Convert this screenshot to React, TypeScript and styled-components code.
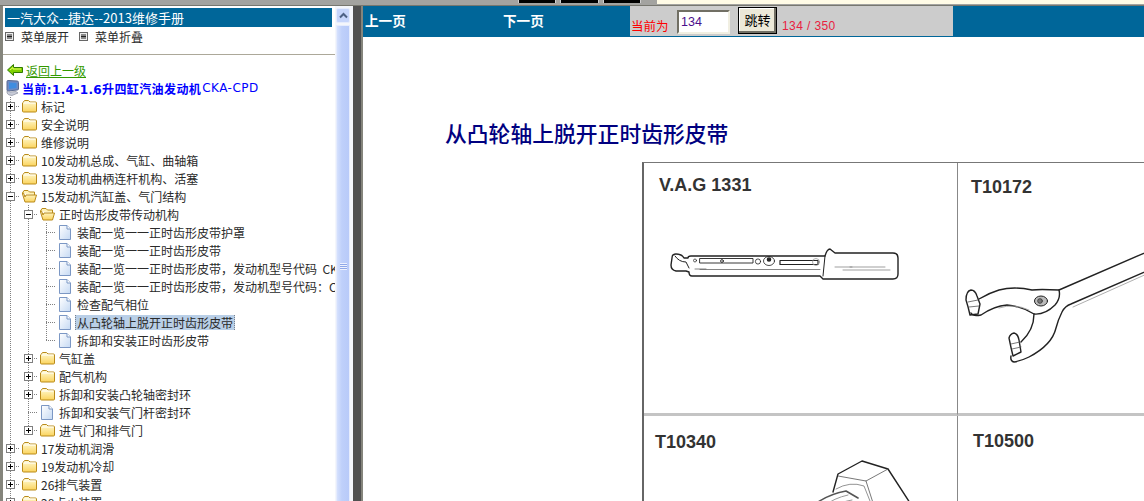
import React from 'react'
import styled, { createGlobalStyle } from 'styled-components'

const cjk = `"Noto Sans CJK SC", "Liberation Sans", sans-serif`

const GlobalStyle = createGlobalStyle`
  html, body {
    margin: 0;
    padding: 0;
    height: 501px;
    overflow: hidden;
    background: #fff;
    font-family: ${cjk};
    font-size: 12px;
  }
`

const Page = styled.div`
  display: flex;
  flex-direction: column;
  width: 1144px;
  height: 501px;
  overflow: hidden;
`

const WindowStrip = styled.div`
  display: flex;
  height: 6px;
  flex: none;
  background: #a3a3a0;
  border-bottom: 1px solid #77776f;
  box-sizing: border-box;
`

const StripButtons = styled.div`
  display: flex;
  gap: 4px;
  width: 139px;
  margin-left: 518px;
`

const StripButton = styled.div<{ $w: number }>`
  width: ${({ $w }) => $w}px;
  height: 3px;
  background: #000;
  border: 0 solid #cfcfcf;
  border-width: 0 1px;
  box-sizing: border-box;
`

const StripCream = styled.div`
  flex: 1;
  height: 4px;
  background: #fffbe6;
`

const Frames = styled.div`
  display: flex;
  flex: 1;
  min-height: 0;
`

const LeftFrame = styled.div`
  display: flex;
  width: 353px;
  flex: none;
  box-sizing: border-box;
  border-left: 3px solid #85857c;
`

const MenuPane = styled.div`
  width: 332px;
  flex: none;
  overflow: hidden;
  background: #fff;
`

const TitleBar = styled.div`
  margin: 2px 3px 0 2px;
  height: 19px;
  padding-left: 2px;
  background: #006699;
  color: #fff;
  font-size: 13px;
  line-height: 19px;
  white-space: nowrap;
`

const MenuActions = styled.div`
  display: flex;
  align-items: center;
  height: 19px;
  padding-left: 2px;
  margin-bottom: 8px;
  color: #2a2a2a;
`

const MenuAction = styled.span`
  display: flex;
  align-items: center;
  width: 74px;
  gap: 7px;
  white-space: nowrap;
`

const Divider = styled.div`
  height: 1px;
  background: #aca899;
`

const BackRow = styled.div`
  display: flex;
  align-items: center;
  height: 18px;
  margin-top: 6px;
  padding-left: 4px;
  gap: 3px;
`

const BackLink = styled.a`
  color: #339900;
  text-decoration: underline;
`

const CurrentRow = styled.div`
  display: flex;
  align-items: center;
  height: 18px;
  padding-left: 3px;
  gap: 3px;
  color: #0000ff;
  font-family: "DejaVu Sans", ${cjk};
  white-space: nowrap;
`

const CurrentName = styled.b`
  font-weight: 700;
  letter-spacing: 0.38px;
`

const CurrentCode = styled.span`
  margin-left: -2px;
  letter-spacing: 0.5px;
`

const TreeList = styled.div`
  margin-left: -1px;
`

const TreeRow = styled.div`
  display: flex;
  height: 18px;
  white-space: nowrap;
  color: #2a2a2a;
`

const vdots = 'repeating-linear-gradient(#808080 0 1px, transparent 1px 2px)'
const hdots = 'repeating-linear-gradient(90deg, #808080 0 1px, transparent 1px 2px)'

const Guide = styled.span`
  width: 18px;
  flex: none;
  background: ${vdots} 8px 0 / 1px 100% no-repeat;
`

const Joint = styled.span<{ $last?: boolean }>`
  width: 18px;
  height: 18px;
  flex: none;
  padding: 5px 0 0 4px;
  box-sizing: border-box;
  background-image: ${hdots}, ${vdots};
  background-repeat: no-repeat;
  background-position: 8px 9px, 8px 0;
  background-size: 10px 1px, 1px ${({ $last }) => ($last ? '9px' : '18px')};
`

const Toggle = styled.svg`
  display: block;
  background: #fff;
`

const NodeIcon = styled.span`
  display: flex;
  width: 18px;
  flex: none;
  align-items: center;
  justify-content: center;
`

const NodeLabel = styled.span<{ $selected?: boolean }>`
  align-self: center;
  height: 15px;
  margin-left: 1px;
  padding: 0 1px;
  line-height: 15px;
  white-space: pre;
  border: 0 ${({ $selected }) => ($selected ? 'dotted #77808c' : 'solid transparent')};
  border-width: 0 1px;
  background: ${({ $selected }) => ($selected ? '#b9cfe7' : 'transparent')};
`

const ScrollTrack = styled.div`
  width: 18px;
  flex: none;
  padding: 2px 3px 0 1px;
  box-sizing: border-box;
  background: #f4f6fb;
`

const ScrollButton = styled.div`
  display: flex;
  align-items: center;
  justify-content: center;
  height: 15px;
  border-radius: 2px;
  background: #c6d5fb;
  border: 1px solid #e6ecfd;
  box-sizing: border-box;
`

const ScrollThumb = styled.div`
  display: flex;
  align-items: center;
  justify-content: center;
  height: 482px;
  margin-top: 2px;
  background: linear-gradient(90deg, #d6e1fd, #bfd0fa 40%, #b8caf9);
  border: 1px solid #e6ecfd;
  box-sizing: border-box;
`

const Grip = styled.div`
  width: 7px;
  height: 7px;
  background: repeating-linear-gradient(#eef2fe 0 1px, #8fa8e8 1px 2px);
`

const Splitter = styled.div`
  width: 8px;
  flex: none;
  background: #505050;
`

const RightFrame = styled.div`
  display: flex;
  flex: 1;
  min-width: 0;
  flex-direction: column;
  overflow: hidden;
  background: #fff;
  border-left: 2px solid #85857c;
`

const TopBar = styled.div`
  display: flex;
  flex: none;
  height: 31px;
  padding-bottom: 1px;
  box-sizing: border-box;
  background: #006699;
`

const NavLink = styled.a<{ $w: number }>`
  width: ${({ $w }) => $w}px;
  flex: none;
  padding: 6px 0 0 2px;
  box-sizing: border-box;
  color: #fff;
  font-size: 13.6px;
  font-weight: 700;
  line-height: 16px;
`

const PagerPanel = styled.div`
  display: flex;
  width: 323px;
  flex: none;
  background: #cccccc;
  align-items: flex-start;
`

const PagerText = styled.span`
  margin: 12px 0 0 1px;
  width: 46px;
  color: #ff0000;
  font-size: 12.5px;
  line-height: 16px;
`

const PageInput = styled.input`
  width: 53px;
  height: 24px;
  margin: 4px 8px 0 0;
  padding: 0 0 0 2px;
  box-sizing: border-box;
  border: 2px solid;
  border-color: #716f64 #f1efe2 #f1efe2 #716f64;
  background: #fff;
  color: #4b0f8c;
  font-family: "Liberation Sans", sans-serif;
  font-size: 12.5px;
`

const JumpButton = styled.button`
  width: 39px;
  height: 27px;
  margin: 1px 5px 0 0;
  padding: 0 0 3px;
  border: 1px solid #000;
  box-shadow: inset -2px -2px 0 #716f64, inset 1px 1px 0 #fff;
  background: #ece9d8;
  color: #000;
  font-family: ${cjk};
  font-size: 13px;
`

const PageCount = styled.span`
  margin-top: 12px;
  color: #e8213f;
  font-family: "Liberation Sans", sans-serif;
  font-size: 12px;
  line-height: 16px;
  letter-spacing: 0.4px;
`

const Article = styled.div`
  flex: 1;
  min-height: 0;
  overflow: hidden;
`

const Heading = styled.h1`
  margin: 82px 0 0 82px;
  color: #000080;
  font-family: ${cjk};
  font-size: 21.8px;
  font-weight: 500;
  line-height: 28px;
  white-space: nowrap;
`

const ToolTable = styled.div`
  display: grid;
  grid-template-columns: 313px 320px;
  grid-template-rows: 253px 120px;
  margin: 15px 0 0 279px;
  border-top: 1px solid #777;
  border-left: 2px solid #666;
`

const ToolCell = styled.div<{ $x: number; $y: number; $wide?: boolean }>`
  padding: ${({ $y }) => $y}px 0 0 ${({ $x }) => $x}px;
  box-sizing: border-box;
  overflow: hidden;
  ${({ $wide }) => ($wide ? 'border-left: 1px solid #888;' : '')}
`

const TopRowCell = styled(ToolCell)`
  border-bottom: 3px solid #c4c4c4;
`

const ToolName = styled.div`
  height: 18px;
  color: #333;
  font-family: "Liberation Sans", sans-serif;
  font-size: 18px;
  font-weight: 700;
  line-height: 18px;
  white-space: nowrap;
`

const Drawing = styled.svg<{ $x: number; $y: number }>`
  display: block;
  margin: ${({ $y }) => $y}px 0 0 ${({ $x }) => $x}px;
  fill: none;
  stroke: #222;
  stroke-width: 1.4;
  stroke-linejoin: round;
  stroke-linecap: round;
`

const BoxIcon = () => (
  <svg width="9" height="9" viewBox="0 0 9 9">
    <rect x="0.5" y="0.5" width="8" height="8" fill="#eee" stroke="#666" />
    <path d="M2 3h5M2 4.5h5M2 6h5" stroke="#222" />
  </svg>
)

const ToggleBox = ({ open }: { open: boolean }) => (
  <Toggle width="9" height="9" viewBox="0 0 9 9">
    <rect x="0.5" y="0.5" width="8" height="8" fill="#fff" stroke="#808080" />
    <path d={open ? 'M2 4.5h5' : 'M2 4.5h5M4.5 2v5'} stroke="#000" />
  </Toggle>
)

const FolderGradients = () => (
  <svg width="0" height="0" style={{ display: 'block' }}>
    <defs>
      <linearGradient id="folderFill" x1="0" y1="0" x2="0" y2="1">
        <stop offset="0" stopColor="#fffbd6" />
        <stop offset="1" stopColor="#fbd35c" />
      </linearGradient>
      <linearGradient id="docFill" x1="0" y1="0" x2="1" y2="1">
        <stop offset="0" stopColor="#ffffff" />
        <stop offset="1" stopColor="#c5d9f3" />
      </linearGradient>
    </defs>
  </svg>
)

const FolderIcon = () => (
  <svg width="15" height="14" viewBox="0 0 15 14">
    <path d="M1 3.5 L2.5 1.5 H6.5 L8 3 H13.5 Q14.5 3 14.5 4 V12 Q14.5 13 13.5 13 H1.5 Q0.5 13 0.5 12 V4 Z" fill="url(#folderFill)" stroke="#b98a1b" />
    <path d="M1.5 4 H13.5" stroke="#fff" />
  </svg>
)

const FolderOpenIcon = () => (
  <svg width="15" height="14" viewBox="0 0 15 14">
    <path d="M0.5 4 L2 1.5 H6 L7.5 3 H12.5 V6" fill="#fff3b8" stroke="#b98a1b" />
    <path d="M0.5 4 L0.5 5 L3 13 H12.5 L14.5 6 H4 L3 8 L1.5 4 Z" fill="url(#folderFill)" stroke="#b98a1b" />
  </svg>
)

const DocIcon = () => (
  <svg width="12" height="15" viewBox="0 0 12 15">
    <path d="M0.5 0.5 H8 L11.5 4 V14.5 H0.5 Z" fill="url(#docFill)" stroke="#7b97c4" />
    <path d="M8 0.5 V4 H11.5" fill="#fff" stroke="#7b97c4" />
  </svg>
)

const BackArrow = () => (
  <svg width="16" height="12" viewBox="0 0 16 12">
    <path d="M0.5 6 L6.5 0.5 V3.5 H15.5 V8.5 H6.5 V11.5 Z" fill="#7fd000" stroke="#2f7a00" />
    <path d="M3 6 L6 3.5 V5 H14" fill="none" stroke="#e9ff5c" />
  </svg>
)

const ComputerIcon = () => (
  <svg width="13" height="16" viewBox="0 0 13 16">
    <path d="M1 1.5 Q1 0.5 2 0.5 L11 1 Q12.5 1 12.5 2.5 V9 Q12.5 10 11 10 L2 11 Q1 11 1 10 Z" fill="#6f8bc4" stroke="#5a6a90" />
    <path d="M3 2.5 L10.5 3 V8 L3 9 Z" fill="#3f8de0" />
    <path d="M1 11 Q3 11 4 12 L10 11.5 L12 13 L6 15.5 Q2 15.5 1 13 Z" fill="#c8ccd8" stroke="#7d8394" strokeWidth="0.6" />
  </svg>
)

const ScrollUp = () => (
  <svg width="9" height="7" viewBox="0 0 9 7">
    <path d="M1 5.5 L4.5 2 L8 5.5" fill="none" stroke="#4d6185" strokeWidth="2" />
  </svg>
)

type Kind = 'closed' | 'open' | 'doc'
type Node = { label: string; depth: number; kind: Kind; last?: boolean; selected?: boolean }

const nodes: Node[] = [
  { label: '标记', depth: 0, kind: 'closed' },
  { label: '安全说明', depth: 0, kind: 'closed' },
  { label: '维修说明', depth: 0, kind: 'closed' },
  { label: '10发动机总成、气缸、曲轴箱', depth: 0, kind: 'closed' },
  { label: '13发动机曲柄连杆机构、活塞', depth: 0, kind: 'closed' },
  { label: '15发动机汽缸盖、气门结构', depth: 0, kind: 'open' },
  { label: '正时齿形皮带传动机构', depth: 1, kind: 'open' },
  { label: '装配一览一一正时齿形皮带护罩', depth: 2, kind: 'doc' },
  { label: '装配一览一一正时齿形皮带', depth: 2, kind: 'doc' },
  { label: '装配一览一一正时齿形皮带\uFF0C发动机型号代码  CKA-CPD', depth: 2, kind: 'doc' },
  { label: '装配一览一一正时齿形皮带\uFF0C发动机型号代码\uFF1ACKA-CPD', depth: 2, kind: 'doc' },
  { label: '检查配气相位', depth: 2, kind: 'doc' },
  { label: '从凸轮轴上脱开正时齿形皮带', depth: 2, kind: 'doc', selected: true },
  { label: '拆卸和安装正时齿形皮带', depth: 2, kind: 'doc', last: true },
  { label: '气缸盖', depth: 1, kind: 'closed' },
  { label: '配气机构', depth: 1, kind: 'closed' },
  { label: '拆卸和安装凸轮轴密封环', depth: 1, kind: 'closed' },
  { label: '拆卸和安装气门杆密封环', depth: 1, kind: 'doc' },
  { label: '进气门和排气门', depth: 1, kind: 'closed', last: true },
  { label: '17发动机润滑', depth: 0, kind: 'closed' },
  { label: '19发动机冷却', depth: 0, kind: 'closed' },
  { label: '26排气装置', depth: 0, kind: 'closed' },
  { label: '28点火装置', depth: 0, kind: 'closed' },
]

function TreeNode({ node }: { node: Node }) {
  return (
    <TreeRow>
      {Array.from({ length: node.depth }).map((_, i) => <Guide key={i} />)}
      <Joint $last={node.last}>
        {node.kind !== 'doc' && <ToggleBox open={node.kind === 'open'} />}
      </Joint>
      <NodeIcon>
        {node.kind === 'closed' && <FolderIcon />}
        {node.kind === 'open' && <FolderOpenIcon />}
        {node.kind === 'doc' && <DocIcon />}
      </NodeIcon>
      <NodeLabel $selected={node.selected}>{node.label}</NodeLabel>
    </TreeRow>
  )
}

const TorqueWrench = () => (
  <Drawing $x={1} $y={46} width="250" height="50" viewBox="660 240 250 50">
    <path d="M688 258 Q688 256 691 256 H825 Q827 249 830 249 L835 253 H893 Q898 253 898 258 V274 Q898 279 893 279 H823 L820 276 H692 Q689 276 689 272 L686 271 H676 Q671 270 671 265 L672 258 Q672 254 676 254 Q682 254 684 258 Z" />
    <path d="M825 256 L823 276 M675 256 Q679 262 686 262 L689 268" strokeWidth="1" />
    <rect x="700" y="258.5" width="53" height="4.5" strokeWidth="0.9" />
    <rect x="780" y="260.5" width="38" height="4" strokeWidth="1.2" />
    <circle cx="695" cy="260.5" r="1.5" strokeWidth="0.7" />
    <circle cx="722" cy="261" r="1.4" strokeWidth="0.9" />
    <circle cx="758" cy="261.5" r="2.6" strokeWidth="0.8" />
    <ellipse cx="769" cy="261" rx="5.5" ry="4.5" strokeWidth="0.8" />
    <circle cx="769" cy="259.5" r="1.6" fill="#222" />
    <circle cx="816" cy="262" r="3.5" stroke="#999" strokeWidth="0.8" />
    <path d="M700 269.5 H820 M695 269 H706" stroke="#666" strokeWidth="0.8" />
    <path d="M835 267 H852 M843 270 H890 M850 267 H885" stroke="#777" strokeWidth="0.7" />
  </Drawing>
)

const PinSpanner = () => (
  <Drawing $x={-12} $y={49} width="190" height="130" viewBox="960 245 190 130">
    <path d="M1150 251 L1060 290 Q1040 289 1033 290 Q1015 286 1000 290 Q990 293 980 299" />
    <path d="M1150 270 L1072 304 Q1066 306 1063 312 Q1059 320 1057 328 Q1053 345 1030 357 Q1022 361 1015 362 Q1011 361 1012 356" />
    <path d="M1150 273 L1074 307" stroke="#999" strokeWidth="0.8" />
    <path d="M1060 290 Q1062 298 1056 305 Q1046 315 1035 314 Q1022 306 1008 305 Q995 306 982 315 Q974 317 972 313" />
    <path d="M1035 314 Q1035 330 1022 342" />
    <path d="M1000 308 Q1015 303 1030 310" stroke="#999" strokeWidth="0.8" />
    <path d="M967 300 Q967 291 972 290 Q976 290 978 296 L981 304 L979 314 L971 315 Q969 306 967 300 Z" />
    <path d="M969 302 L979 300 M970 307 L980 306" stroke="#555" strokeWidth="0.8" />
    <path d="M1010 338 Q1011 334 1015 333 Q1019 334 1020 340 L1022 352 L1014 356 Q1012 348 1010 338 Z" />
    <path d="M1012 344 L1021 342 M1013 349 L1022 347" stroke="#555" strokeWidth="0.8" />
    <ellipse cx="1042" cy="301" rx="6.5" ry="5" fill="#bbb" strokeWidth="1" />
    <circle cx="1041" cy="301" r="2.4" fill="#777" strokeWidth="0.6" />
  </Drawing>
)

const HexBolt = () => (
  <Drawing $x={160} $y={5} width="110" height="50" viewBox="815 455 110 50">
    <path d="M833 491 L838 473 L862 460 L888 468 L912 505" />
    <path d="M838 475 L866 480 L888 468 M866 480 L874 505" stroke="#555" strokeWidth="0.8" />
    <path d="M836 488 Q850 480 864 485 L872 505" stroke="#777" strokeWidth="0.8" />
    <path d="M818 501 Q830 493 846 490 L858 497" stroke="#555" strokeWidth="1.6" />
    <path d="M824 505 Q834 497 848 494 M832 506 Q840 501 852 499" stroke="#999" strokeWidth="1" />
  </Drawing>
)

export default function App() {
  return (
    <Page>
      <GlobalStyle />
      <FolderGradients />
      <WindowStrip>
        <StripButtons>
          <StripButton $w={38} />
          <StripButton $w={39} />
          <StripButton $w={38} />
        </StripButtons>
        <StripCream />
      </WindowStrip>
      <Frames>
        <LeftFrame>
          <MenuPane>
            <TitleBar>一汽大众--捷达--2013维修手册</TitleBar>
            <MenuActions>
              <MenuAction><BoxIcon />菜单展开</MenuAction>
              <MenuAction><BoxIcon />菜单折叠</MenuAction>
            </MenuActions>
            <Divider />
            <BackRow>
              <BackArrow />
              <BackLink>返回上一级</BackLink>
            </BackRow>
            <CurrentRow>
              <ComputerIcon />
              <CurrentName>当前:1.4-1.6升四缸汽油发动机</CurrentName>
              <CurrentCode>CKA-CPD</CurrentCode>
            </CurrentRow>
            <TreeList>
              {nodes.map((node, i) => <TreeNode key={i} node={node} />)}
            </TreeList>
          </MenuPane>
          <ScrollTrack>
            <ScrollButton><ScrollUp /></ScrollButton>
            <ScrollThumb><Grip /></ScrollThumb>
          </ScrollTrack>
        </LeftFrame>
        <Splitter />
        <RightFrame>
          <TopBar>
            <NavLink $w={138}>上一页</NavLink>
            <NavLink $w={129}>下一页</NavLink>
            <PagerPanel>
              <PagerText>当前为</PagerText>
              <PageInput defaultValue="134" />
              <JumpButton>跳转</JumpButton>
              <PageCount>134 / 350</PageCount>
            </PagerPanel>
          </TopBar>
          <Article>
            <Heading>从凸轮轴上脱开正时齿形皮带</Heading>
            <ToolTable>
              <TopRowCell $x={15} $y={13}>
                <ToolName>V.A.G 1331</ToolName>
                <TorqueWrench />
              </TopRowCell>
              <TopRowCell $x={13} $y={15} $wide>
                <ToolName>T10172</ToolName>
                <PinSpanner />
              </TopRowCell>
              <ToolCell $x={11} $y={17}>
                <ToolName>T10340</ToolName>
                <HexBolt />
              </ToolCell>
              <ToolCell $x={15} $y={16} $wide>
                <ToolName>T10500</ToolName>
              </ToolCell>
            </ToolTable>
          </Article>
        </RightFrame>
      </Frames>
    </Page>
  )
}
